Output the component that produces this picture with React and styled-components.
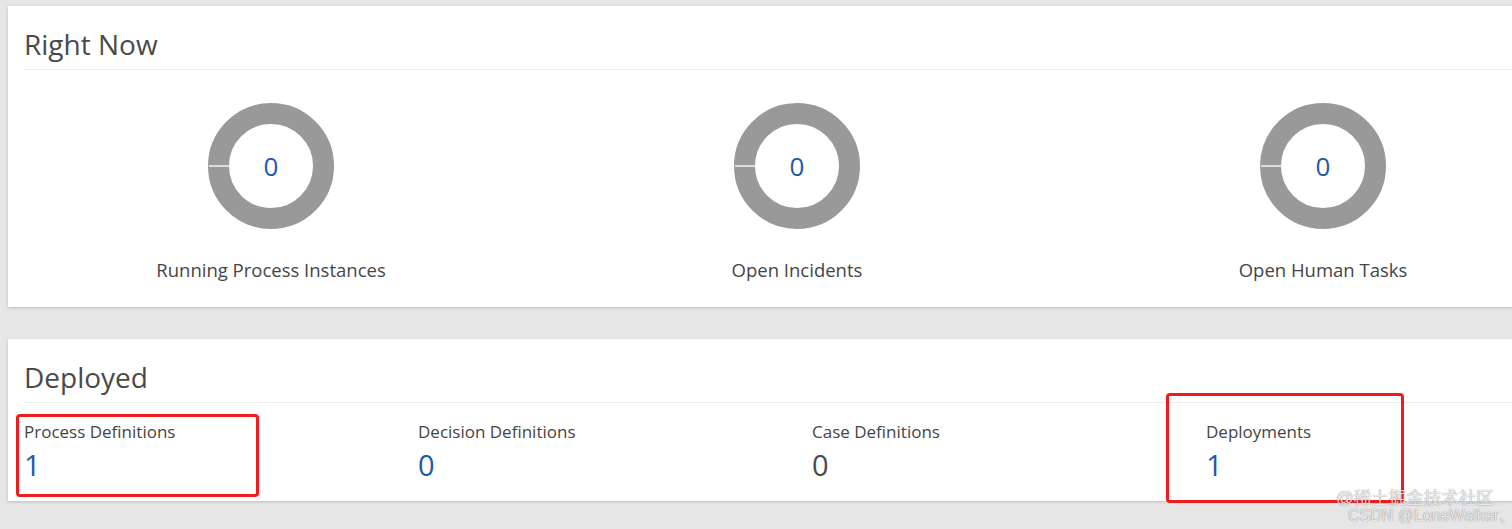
import React from 'react'
import styled, { createGlobalStyle } from 'styled-components'

const GlobalStyle = createGlobalStyle`
    html, body {
        margin: 0;
        padding: 0;
        background: #e6e6e6;
        overflow: hidden;
        font-family: "Open Sans", "Noto Sans", sans-serif;
        color: #454545;
    }
`

const right_now = [
    { label: 'Running Process Instances', value: 0 },
    { label: 'Open Incidents', value: 0 },
    { label: 'Open Human Tasks', value: 0 },
]

const deployed = [
    { label: 'Process Definitions', value: 1, link: true },
    { label: 'Decision Definitions', value: 0, link: true },
    { label: 'Case Definitions', value: 0, link: false },
    { label: 'Deployments', value: 1, link: true },
]

function Donut({ value }) {
    return (
        <DonutWrap>
            <svg width="126" height="126" viewBox="0 0 126 126">
                <circle cx="63" cy="63" r="52.5" fill="none" stroke="#999999" strokeWidth="21" />
                <line x1="1" y1="63" x2="22.5" y2="63" stroke="#eeeeee" strokeWidth="1.6" />
            </svg>
            <DonutValue>{value}</DonutValue>
        </DonutWrap>
    )
}

export default function App() {
    return (
        <>
            <GlobalStyle />
            <Page>
                <Card $height={301}>
                    <Header>
                        <Title>Right Now</Title>
                    </Header>
                    <ChartRow>
                        {right_now.map((item) => (
                            <ChartCol key={item.label}>
                                <Donut value={item.value} />
                                <ChartLabel>{item.label}</ChartLabel>
                            </ChartCol>
                        ))}
                    </ChartRow>
                </Card>
                <Card $height={162}>
                    <Header>
                        <Title>Deployed</Title>
                    </Header>
                    <StatRow>
                        {deployed.map((item) => (
                            <Stat key={item.label}>
                                <StatLabel>{item.label}</StatLabel>
                                <StatValue $link={item.link}>{item.value}</StatValue>
                            </Stat>
                        ))}
                    </StatRow>
                </Card>
                <Mark $left={16} $top={414} $width={243} $height={83} />
                <Mark $left={1166} $top={393} $width={238} $height={110} />
                <Watermark>
                    <span>@稀土掘金技术社区</span>
                    <span>CSDN @LoneWalker、</span>
                </Watermark>
            </Page>
        </>
    )
}

const Page = styled.div`
    position: relative;
    width: 1600px;
    height: 529px;
    padding: 6px 0 0 8px;
    box-sizing: border-box;
`

const Card = styled.section`
    background: #ffffff;
    height: ${(p) => p.$height}px;
    margin-bottom: 32px;
    box-shadow: 0 1px 3px rgba(0, 0, 0, 0.18);
    box-sizing: border-box;
`

const Header = styled.div`
    margin: 0 0 0 16px;
    height: 64px;
    border-bottom: 1px solid #ececec;
    box-sizing: border-box;
    display: flex;
    align-items: center;
    padding-top: 12px;
`

const Title = styled.h2`
    margin: 0;
    font-size: 28px;
    font-weight: 400;
    color: #4a4a4a;
`

const ChartRow = styled.div`
    display: grid;
    grid-template-columns: repeat(3, 526px);
    padding-top: 33px;
`

const ChartCol = styled.div`
    display: flex;
    flex-direction: column;
    align-items: center;
`

const DonutWrap = styled.div`
    position: relative;
    width: 126px;
    height: 126px;
    svg {
        display: block;
    }
`

const DonutValue = styled.span`
    position: absolute;
    inset: 0;
    display: flex;
    align-items: center;
    justify-content: center;
    font-size: 26px;
    color: #1c5aa8;
`

const ChartLabel = styled.div`
    margin-top: 28px;
    font-size: 18.5px;
    color: #454545;
`

const StatRow = styled.div`
    display: grid;
    grid-template-columns: repeat(4, 394px);
    padding: 16px 0 0 16px;
`

const Stat = styled.div`
    display: flex;
    flex-direction: column;
`

const StatLabel = styled.div`
    font-size: 17px;
    line-height: 25px;
    color: #454545;
`

const StatValue = styled.div`
    font-size: 29px;
    line-height: 42px;
    color: ${(p) => (p.$link ? '#1c5aa8' : '#4a4a4a')};
`

const Mark = styled.div`
    position: absolute;
    left: ${(p) => p.$left}px;
    top: ${(p) => p.$top}px;
    width: ${(p) => p.$width}px;
    height: ${(p) => p.$height}px;
    border: 3px solid #ee1c1c;
    border-radius: 4px;
    box-sizing: border-box;
    pointer-events: none;
`

const Watermark = styled.div`
    position: absolute;
    left: 1336px;
    top: 489px;
    display: flex;
    flex-direction: column;
    align-items: flex-start;
    font-family: "Liberation Sans", "Noto Sans CJK SC", sans-serif;
    font-size: 17.5px;
    line-height: 18px;
    color: rgba(255, 255, 255, 0.85);
    text-shadow: 0 0 1px rgba(0, 0, 0, 0.6);
    span:last-child {
        font-size: 16px;
        margin-left: 12px;
    }
`
